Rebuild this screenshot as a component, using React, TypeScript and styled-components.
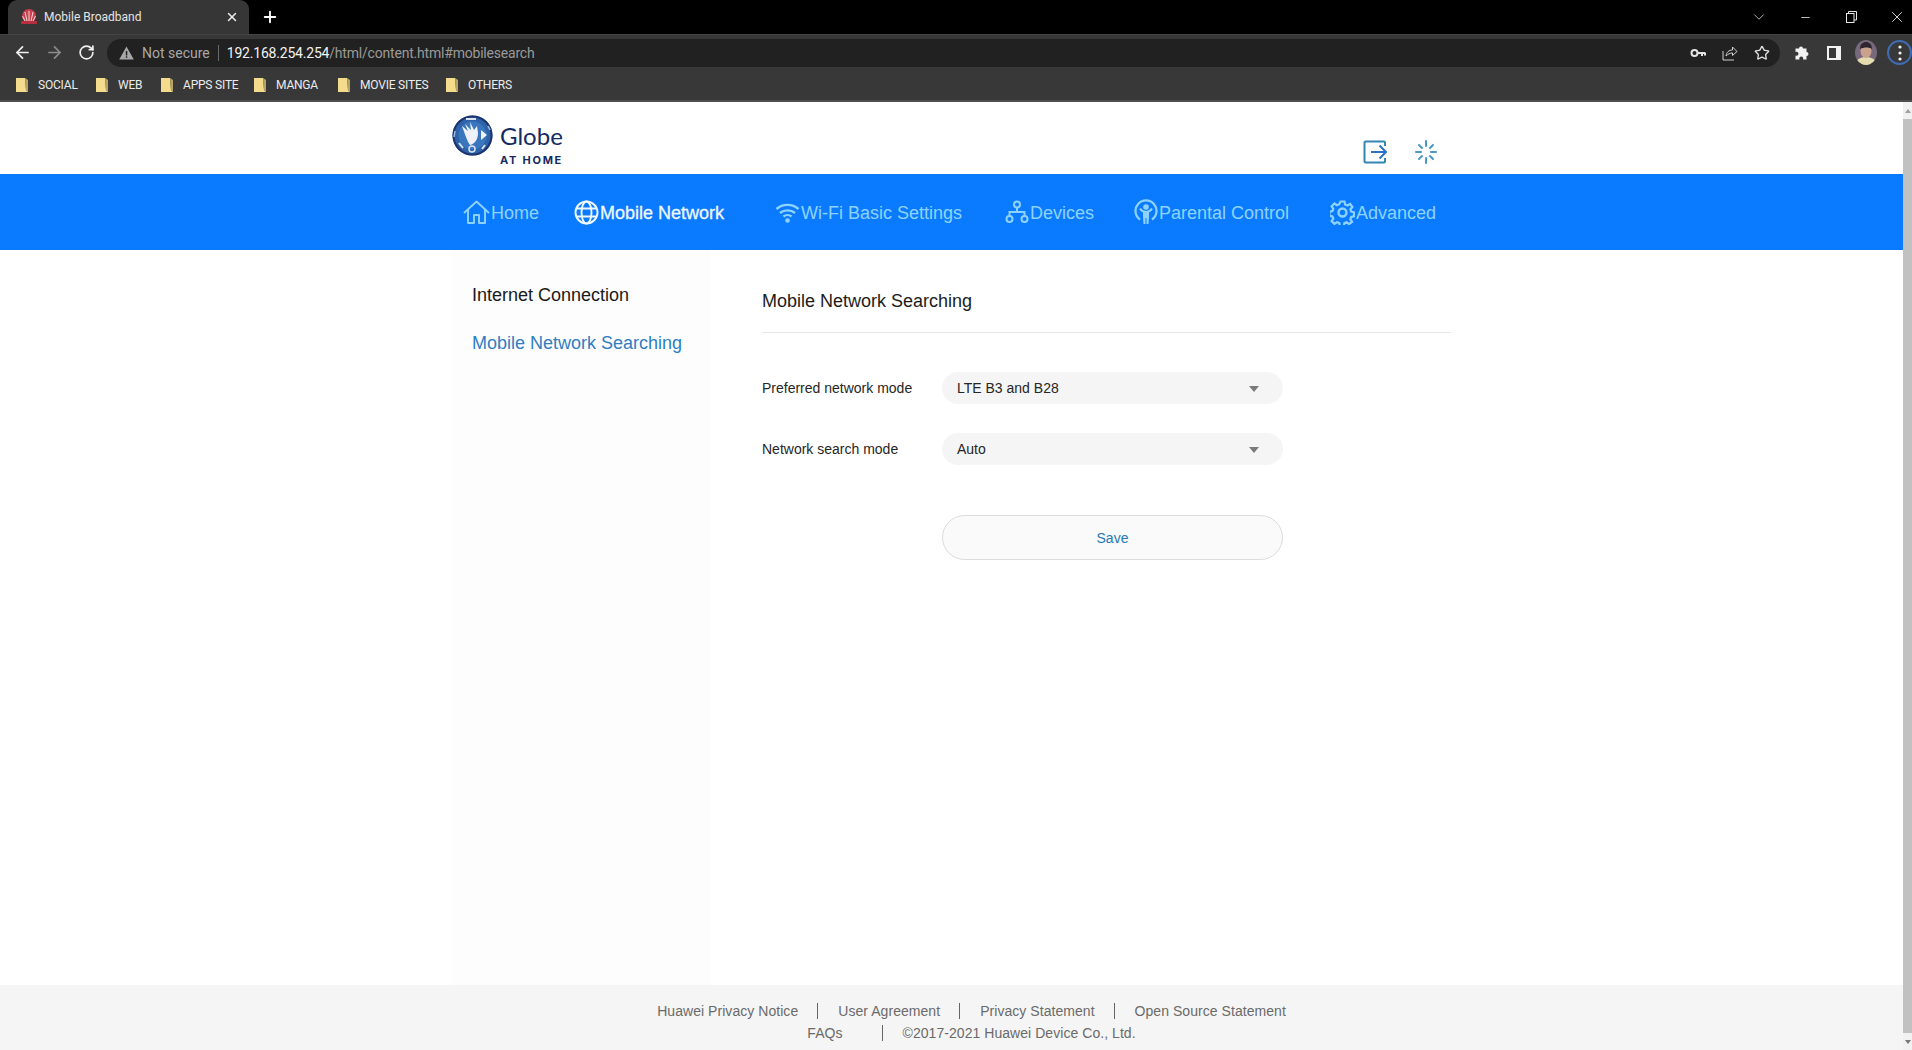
import React from "react";
import styled, { createGlobalStyle } from "styled-components";
import { ArrowLeft, ArrowRight, RotateCw, Star, X, Plus, Minus, ChevronDown } from "lucide-react";

const GlobalStyle = createGlobalStyle`
  html, body {
    margin: 0;
    padding: 0;
    height: 100%;
    overflow: hidden;
    background: #fff;
    font-family: "Liberation Sans", Arial, sans-serif;
  }
  #root { height: 100%; }
`;

const Screen = styled.div`
  width: 1912px;
  height: 1050px;
  display: flex;
  flex-direction: column;
  overflow: hidden;
`;

/* browser chrome */
const TabStrip = styled.div`
  height: 34px;
  background: #000;
  display: flex;
  align-items: flex-end;
  padding-left: 8px;
  color: #e8e8e8;
`;

const Tab = styled.div`
  width: 241px;
  height: 34px;
  box-sizing: border-box;
  background: #363636;
  border-radius: 9px 9px 0 0;
  display: flex;
  align-items: center;
  padding: 0 10px 0 12px;
  font: 12px Roboto, sans-serif;
  color: #e4e4e4;
`;

const TabTitle = styled.span`
  margin-left: 6px;
  flex: 1;
`;

const NewTab = styled.div`
  width: 42px;
  height: 34px;
  display: flex;
  align-items: center;
  justify-content: center;
  color: #fff;
`;

const WindowControls = styled.div`
  margin-left: auto;
  margin-right: -8px;
  height: 34px;
  display: flex;
  align-items: center;
`;

const WindowButton = styled.div`
  width: 46px;
  height: 32px;
  display: flex;
  align-items: center;
  justify-content: center;
  color: #e6e6e6;
`;

const Toolbar = styled.div`
  height: 36px;
  box-sizing: border-box;
  background: #383838;
  border-top: 1px solid #444;
  display: flex;
  align-items: center;
  padding: 0 0 0 6px;
`;

const NavButton = styled.div<{ $dim?: boolean }>`
  width: 32px;
  display: flex;
  justify-content: center;
  color: ${(p) => (p.$dim ? "#8c8c8c" : "#f0f0f0")};
`;

const Omnibox = styled.div`
  margin-left: 5px;
  flex: 0 0 1673px;
  height: 28px;
  box-sizing: border-box;
  background: #212121;
  border-radius: 14px;
  display: flex;
  align-items: center;
  padding: 0 10px 0 12px;
  font: 14px Roboto, sans-serif;
`;

const NotSecure = styled.span`
  color: #a8a8a8;
  margin-left: 8px;
  padding-right: 8px;
  border-right: 1px solid #6a6a6a;
  line-height: 16px;
`;

const Url = styled.span`
  color: #f2f2f2;
  margin-left: 8px;
  letter-spacing: -0.2px;
`;

const UrlRest = styled.span`
  color: #9a9a9a;
`;

const OmniActions = styled.div`
  margin-left: auto;
  display: flex;
  align-items: center;
  gap: 16px;
  color: #e0e0e0;
`;

const ToolActions = styled.div`
  margin-left: 14px;
  display: flex;
  align-items: center;
  gap: 16px;
`;

const AvatarSlot = styled.div`
  display: flex;
  margin: 0 -3px;
`;

const MenuRing = styled.div`
  width: 25px;
  height: 25px;
  box-sizing: border-box;
  border: 2px solid #3f6cb4;
  border-radius: 50%;
  display: flex;
  align-items: center;
  justify-content: center;
  margin-left: -3px;
`;

const Bookmarks = styled.div`
  height: 32px;
  box-sizing: border-box;
  background: #383838;
  border-bottom: 2px solid #4e4e4e;
  display: flex;
  align-items: center;
  padding-left: 16px;
`;

const Bookmark = styled.div<{ $width: number }>`
  width: ${(p) => p.$width}px;
  display: flex;
  align-items: center;
  gap: 10px;
  font: 12px Roboto, sans-serif;
  letter-spacing: -0.2px;
  color: #ececec;
`;

/* page */
const Viewport = styled.div`
  flex: 1;
  min-height: 0;
  display: flex;
`;

const Page = styled.div`
  flex: 1;
  display: flex;
  flex-direction: column;
`;

const Scrollbar = styled.div`
  width: 9px;
  background: #f1f1f1;
  display: flex;
  flex-direction: column;
  align-items: center;
`;

const ScrollArrow = styled.div<{ $down?: boolean }>`
  height: 17px;
  display: flex;
  align-items: center;
  &::before {
    content: "";
    border-left: 3px solid transparent;
    border-right: 3px solid transparent;
    ${(p) => (p.$down ? "border-top: 4px solid #777;" : "border-bottom: 4px solid #a0a0a0;")}
  }
`;

const ScrollThumb = styled.div`
  flex: 1;
  width: 9px;
  background: #c1c1c1;
`;

const Container = styled.div`
  width: 1000px;
  margin-left: 451px;
`;

const Header = styled(Container)`
  height: 72px;
  display: flex;
  justify-content: space-between;
`;

const Logo = styled.div`
  display: flex;
  padding: 13px 0 0 1px;
`;

const LogoText = styled.div`
  margin: 7px 0 0 7px;
  color: #152a63;
`;

const LogoName = styled.div`
  font: 400 24px/27px Lato, sans-serif;
`;

const LogoTag = styled.div`
  font: 700 11px/13px Inter, sans-serif;
  letter-spacing: 1.75px;
  margin-top: 5px;
`;

const HeaderActions = styled.div`
  display: flex;
  align-items: flex-end;
  gap: 28px;
  padding: 0 14px 10px 0;
`;

const NavBar = styled.div`
  height: 76px;
  background: #0a7bff;
`;

const NavList = styled(Container)`
  height: 100%;
  display: flex;
  align-items: center;
  padding-left: 12px;
  box-sizing: border-box;
`;

const NavItem = styled.div<{ $width: number; $active?: boolean }>`
  width: ${(p) => p.$width}px;
  display: flex;
  align-items: center;
  gap: 1px;
  font-size: 18px;
  color: ${(p) => (p.$active ? "#eef8ff" : "#8ed3ff")};
  ${(p) => p.$active && "-webkit-text-stroke: 0.3px #eef8ff;"}
`;

const NavLabel = styled.span`
  padding-top: 2px;
`;

const Content = styled(Container)`
  flex: 1;
  display: flex;
`;

const Sidebar = styled.div`
  width: 259px;
  background: #fdfdfd;
  padding: 35px 0 0 21px;
  box-sizing: border-box;
`;

const SideItem = styled.div<{ $active?: boolean }>`
  font-size: 18px;
  line-height: 21px;
  margin-bottom: 27px;
  color: ${(p) => (p.$active ? "#2f7dc3" : "#1a1a1a")};
`;

const Main = styled.div`
  flex: 1;
  margin-left: 52px;
`;

const Title = styled.div`
  height: 83px;
  box-sizing: border-box;
  padding-top: 41px;
  font-size: 18px;
  line-height: 21px;
  color: #1c1c1c;
  border-bottom: 1px solid #e6e6e6;
`;

const Form = styled.div`
  padding-top: 39px;
`;

const Row = styled.div`
  display: flex;
  align-items: center;
  margin-bottom: 29px;
`;

const Label = styled.div`
  width: 180px;
  font-size: 14px;
  color: #262626;
`;

const SelectBox = styled.div`
  width: 341px;
  height: 32px;
  box-sizing: border-box;
  background: #f5f5f5;
  border-radius: 16px;
  display: flex;
  align-items: center;
  justify-content: space-between;
  padding: 0 24px 0 15px;
  font-size: 14px;
  color: #262626;
  &::after {
    content: "";
    margin-top: 2px;
    border-left: 5.5px solid transparent;
    border-right: 5.5px solid transparent;
    border-top: 6px solid #7b7b7b;
  }
`;

const SaveButton = styled.button`
  display: block;
  margin: 50px 0 0 180px;
  width: 341px;
  height: 45px;
  box-sizing: border-box;
  background: #fafafa;
  border: 1px solid #dcdcdc;
  border-radius: 23px;
  font: 14px "Liberation Sans", Arial, sans-serif;
  color: #2878b4;
  padding: 0;
`;

const Footer = styled.div`
  height: 65px;
  box-sizing: border-box;
  background: #f5f5f5;
  padding: 16px 0 0 40px;
  font-size: 14px;
  letter-spacing: 0.05px;
  color: #6a6a6a;
`;

const FooterRow = styled.div`
  display: flex;
  justify-content: center;
  height: 22px;
  line-height: 20px;
`;

const FooterLink = styled.span<{ $wide?: boolean }>`
  position: relative;
  padding: 0 ${(p) => (p.$wide ? "40px" : "20px")} 0 20px;
  &:not(:last-child)::after {
    content: "";
    position: absolute;
    right: 0;
    top: 2px;
    height: 16px;
    border-right: 1px solid #666;
  }
`;

const Favicon = () => (
  <svg width="18" height="18" viewBox="0 0 18 18">
    <circle cx="9" cy="8" r="7" fill="#c9404f" />
    <path d="M9 3v10M5 4l2 9M13 4l-2 9M2.5 8l3 6M15.5 8l-3 6" stroke="#f3d6d6" strokeWidth="1" />
    <rect x="1" y="13" width="16" height="3" rx="1" fill="#b8303f" />
  </svg>
);

const WarnIcon = () => (
  <svg width="15" height="14" viewBox="0 0 15 14">
    <path d="M7.5 0.5 14.8 13.5H.2Z" fill="#a8a8a8" />
    <rect x="6.8" y="5" width="1.5" height="4.5" fill="#222" />
    <rect x="6.8" y="10.3" width="1.5" height="1.5" fill="#222" />
  </svg>
);

const KeyIcon = () => (
  <svg width="16" height="16" viewBox="0 0 16 16" fill="none">
    <circle cx="4.5" cy="8" r="3" stroke="#e4e4e4" strokeWidth="2" />
    <path d="M7.5 8H15.5M12 8v3M15 8v2.5" stroke="#e4e4e4" strokeWidth="2" />
  </svg>
);

const ShareIcon = () => (
  <svg width="16" height="16" viewBox="0 0 16 16" fill="none" stroke="#d0d0d0" strokeWidth="1">
    <path d="M1 6v9h11" />
    <path d="M4 11c.5-4 3-6 6.5-6V2l4.5 4.5-4.5 4V8C8 8 6 9 4 11Z" />
  </svg>
);

const PuzzleIcon = () => (
  <svg width="16" height="16" viewBox="0 0 16 16">
    <path
      d="M1 5h3.5a2 2 0 1 1 4 0H12v3.5a2 2 0 1 1 0 4V16H8.5a2 2 0 1 0-3.5 0H1v-4a2 2 0 1 0 0-3.5Z"
      fill="#f2f2f2"
      transform="translate(.5 -1.5)"
    />
  </svg>
);

const SidePanelIcon = () => (
  <svg width="16" height="16" viewBox="0 0 16 16">
    <rect x="1" y="1" width="14" height="14" fill="#f2f2f2" />
    <rect x="3" y="3" width="7" height="10" fill="#383838" />
  </svg>
);

const Avatar = () => (
  <svg width="22" height="25" viewBox="0 0 22 25">
    <defs>
      <clipPath id="avatar-clip">
        <ellipse cx="11" cy="12.5" rx="11" ry="12.5" />
      </clipPath>
    </defs>
    <g clipPath="url(#avatar-clip)">
      <rect width="22" height="25" fill="#77687c" />
      <path d="M0 25c1-6 6-8 11-8s10 2 11 8Z" fill="#e4dcae" />
      <ellipse cx="11" cy="11" rx="5.5" ry="7" fill="#c9a18c" />
      <path d="M5 9c0-5 3-7 6-7s6 2 6 7c-3-2-8-2-12 0Z" fill="#2d2530" />
    </g>
  </svg>
);

const Dots = () => (
  <svg width="4" height="16" viewBox="0 0 4 16" fill="#f0f0f0">
    <circle cx="2" cy="2" r="1.6" />
    <circle cx="2" cy="8" r="1.6" />
    <circle cx="2" cy="14" r="1.6" />
  </svg>
);

const RestoreIcon = () => (
  <svg width="11" height="12" viewBox="0 0 11 12" fill="none" stroke="#e6e6e6" strokeWidth="1">
    <rect x=".5" y="2.5" width="7.5" height="9" />
    <path d="M2.5 2.5V.5h8v8.5H8" />
  </svg>
);

const FolderIcon = () => (
  <svg width="12" height="16" viewBox="0 0 12 16">
    <path d="M0 1h9l1 12 2 2H0Z" fill="#f4dc8c" />
    <path d="M9 1l1 12 2 2V3Z" fill="#b5a466" />
  </svg>
);

const GlobeLogo = () => (
  <svg width="41" height="41" viewBox="0 0 41 41">
    <circle cx="20.5" cy="20.5" r="20" fill="#2f62a8" />
    <circle cx="20.5" cy="20.5" r="19" fill="none" stroke="#1c3570" strokeWidth="2" />
    <circle cx="20.5" cy="20.5" r="14" fill="#3a76bd" />
    <path d="M10 11l6 5-3-7 6 6-1-8 4 8 3-4 1 7c0 6-3 11-8 12-3-4-5-11-8-19Z" fill="#eef2f8" />
    <path d="M29 15l6 5-6 5Z" fill="#f0f4fa" />
    <circle cx="20" cy="34" r="3" fill="none" stroke="#d8e2f0" strokeWidth="1.5" />
    <path d="M14 4h10M7 28l4 5M33 30l-3 4" stroke="#d8e2f0" strokeWidth="2" />
    <path d="M36 11l2 4M3 16l-1 6" stroke="#9fbde0" strokeWidth="1.5" />
  </svg>
);

const LogoutIcon = () => (
  <svg width="24" height="24" viewBox="0 0 24 24" fill="none" strokeWidth="2">
    <path d="M22 6V2.5a1 1 0 0 0-1-1H2.5a1 1 0 0 0-1 1v19a1 1 0 0 0 1 1H21a1 1 0 0 0 1-1V18" stroke="#3486b5" />
    <path d="M8 12h15M16.5 5.5 23 12l-6.5 6.5" stroke="#2f72c9" />
  </svg>
);

const SpinnerIcon = () => (
  <svg width="22" height="24" viewBox="0 0 22 24" stroke="#4a98c6" strokeWidth="2" strokeLinecap="round">
    <path d="M11 1v5M11 18v5M1 12h5M16 12h5M4 5l3 3M15 16l3 3M18 5l-3 3M7 16l-3 3" />
  </svg>
);

const HomeIcon = () => (
  <svg width="27" height="24" viewBox="0 0 27 24" fill="none" stroke="currentColor" strokeWidth="1.9" strokeLinejoin="round">
    <path d="M1 13 13.5 1.5 26 13" />
    <path d="M5 10v13h6v-8h5v8h6V10" />
  </svg>
);

const GlobeIcon = () => (
  <svg width="25" height="25" viewBox="0 0 25 25" fill="none" stroke="currentColor" strokeWidth="1.9">
    <circle cx="12.5" cy="12.5" r="11" />
    <ellipse cx="12.5" cy="12.5" rx="5" ry="11" />
    <path d="M2.5 8.5h20M2.5 16.5h20" />
  </svg>
);

const WifiIcon = () => (
  <svg width="25" height="24" viewBox="0 0 25 24" fill="none" stroke="currentColor" strokeWidth="2.4">
    <path d="M1.5 9c6-5.5 16-5.500 22 0" />
    <path d="M5 13c4-3.500 11-3.500 15 0" />
    <path d="M8.500 16.500c2.200-1.800 5.800-1.800 8 0" />
    <circle cx="12.500" cy="20.500" r="2.300" fill="currentColor" stroke="none" />
  </svg>
);

const DevicesIcon = () => (
  <svg width="24" height="24" viewBox="0 0 24 24" fill="none" stroke="currentColor" strokeWidth="2">
    <circle cx="12" cy="4.500" r="3" />
    <circle cx="4.500" cy="19" r="3" />
    <circle cx="19.500" cy="19" r="3" />
    <path d="M12 7.500V12M4.500 16v-4h15v4" />
  </svg>
);

const ParentalIcon = () => (
  <svg width="24" height="26" viewBox="0 0 24 26" fill="none" stroke="currentColor" strokeWidth="2.2">
    <path d="M6 20.500a10.500 10.500 0 1 1 12 0" />
    <circle cx="12" cy="8" r="2.800" fill="currentColor" stroke="none" />
    <path d="M6 9.500c1.500 2.500 3.500 3.500 6 3.500s4.500-1 6-3.500" strokeWidth="2.200" />
    <path d="M9 13h6v4l-.5 8h-2v-6h-1v6h-2L9 17Z" fill="currentColor" stroke="none" />
  </svg>
);

const GearIcon = () => (
  <svg width="25" height="25" viewBox="0 0 25 25" fill="none" stroke="currentColor" strokeWidth="2.200">
    <circle cx="12.500" cy="12.500" r="4" strokeWidth="2.400" />
    <path d="M10.500 1.500h4l.6 3 2.400 1 2.600-1.600 2.300 3.100-2 2.200.8 2.300 2.800.8v4l-2.800.6-.9 2.400 1.800 2.500-3 2.300-2.400-1.800-2.300.8-.5 2.900h-4l-.6-2.900-2.300-.9-2.500 1.800-2.900-2.900 1.700-2.400-.9-2.300-2.900-.6v-4l2.900-.7.900-2.300-1.700-2.500 2.900-2.800 2.400 1.700 2.400-1Z" />
  </svg>
);

const navItems = [
  { label: "Home", width: 111, Icon: HomeIcon },
  { label: "Mobile Network", width: 201, Icon: GlobeIcon, active: true },
  { label: "Wi-Fi Basic Settings", width: 230, Icon: WifiIcon },
  { label: "Devices", width: 129, Icon: DevicesIcon },
  { label: "Parental Control", width: 196, Icon: ParentalIcon },
  { label: "Advanced", width: 110, Icon: GearIcon },
];

const bookmarks = [
  { label: "SOCIAL", width: 80 },
  { label: "WEB", width: 65 },
  { label: "APPS SITE", width: 93 },
  { label: "MANGA", width: 84 },
  { label: "MOVIE SITES", width: 108 },
  { label: "OTHERS", width: 70 },
];

const App = () => {
  return (
    <Screen>
      <GlobalStyle />
      <TabStrip>
        <Tab>
          <Favicon />
          <TabTitle>Mobile Broadband</TabTitle>
          <X size={14} color="#eee" strokeWidth={2.5} />
        </Tab>
        <NewTab>
          <Plus size={18} strokeWidth={2.5} />
        </NewTab>
        <WindowControls>
          <WindowButton>
            <ChevronDown size={18} strokeWidth={1} />
          </WindowButton>
          <WindowButton>
            <Minus size={13} strokeWidth={1.5} />
          </WindowButton>
          <WindowButton>
            <RestoreIcon />
          </WindowButton>
          <WindowButton>
            <X size={18} strokeWidth={1.2} />
          </WindowButton>
        </WindowControls>
      </TabStrip>
      <Toolbar>
        <NavButton>
          <ArrowLeft size={19} strokeWidth={2.2} />
        </NavButton>
        <NavButton $dim>
          <ArrowRight size={19} strokeWidth={2.2} />
        </NavButton>
        <NavButton>
          <RotateCw size={17} strokeWidth={2.4} />
        </NavButton>
        <Omnibox>
          <WarnIcon />
          <NotSecure>Not secure</NotSecure>
          <Url>
            192.168.254.254<UrlRest>/html/content.html#mobilesearch</UrlRest>
          </Url>
          <OmniActions>
            <KeyIcon />
            <ShareIcon />
            <Star size={16} strokeWidth={2} />
          </OmniActions>
        </Omnibox>
        <ToolActions>
          <PuzzleIcon />
          <SidePanelIcon />
          <AvatarSlot>
            <Avatar />
          </AvatarSlot>
          <MenuRing>
            <Dots />
          </MenuRing>
        </ToolActions>
      </Toolbar>
      <Bookmarks>
        {bookmarks.map((b) => (
          <Bookmark key={b.label} $width={b.width}>
            <FolderIcon />
            {b.label}
          </Bookmark>
        ))}
      </Bookmarks>
      <Viewport>
        <Page>
          <Header>
            <Logo>
              <GlobeLogo />
              <LogoText>
                <LogoName>Globe</LogoName>
                <LogoTag>AT HOME</LogoTag>
              </LogoText>
            </Logo>
            <HeaderActions>
              <LogoutIcon />
              <SpinnerIcon />
            </HeaderActions>
          </Header>
          <NavBar>
            <NavList>
              {navItems.map(({ label, width, Icon, active }) => (
                <NavItem key={label} $width={width} $active={active}>
                  <Icon />
                  <NavLabel>{label}</NavLabel>
                </NavItem>
              ))}
            </NavList>
          </NavBar>
          <Content>
            <Sidebar>
              <SideItem>Internet Connection</SideItem>
              <SideItem $active>Mobile Network Searching</SideItem>
            </Sidebar>
            <Main>
              <Title>Mobile Network Searching</Title>
              <Form>
                <Row>
                  <Label>Preferred network mode</Label>
                  <SelectBox>LTE B3 and B28</SelectBox>
                </Row>
                <Row>
                  <Label>Network search mode</Label>
                  <SelectBox>Auto</SelectBox>
                </Row>
                <SaveButton>Save</SaveButton>
              </Form>
            </Main>
          </Content>
          <Footer>
            <FooterRow>
              <FooterLink>Huawei Privacy Notice</FooterLink>
              <FooterLink>User Agreement</FooterLink>
              <FooterLink>Privacy Statement</FooterLink>
              <FooterLink>Open Source Statement</FooterLink>
            </FooterRow>
            <FooterRow>
              <FooterLink $wide>FAQs</FooterLink>
              <FooterLink>©2017-2021 Huawei Device Co., Ltd.</FooterLink>
            </FooterRow>
          </Footer>
        </Page>
        <Scrollbar>
          <ScrollArrow />
          <ScrollThumb />
          <ScrollArrow $down />
        </Scrollbar>
      </Viewport>
    </Screen>
  );
};

export default App;
